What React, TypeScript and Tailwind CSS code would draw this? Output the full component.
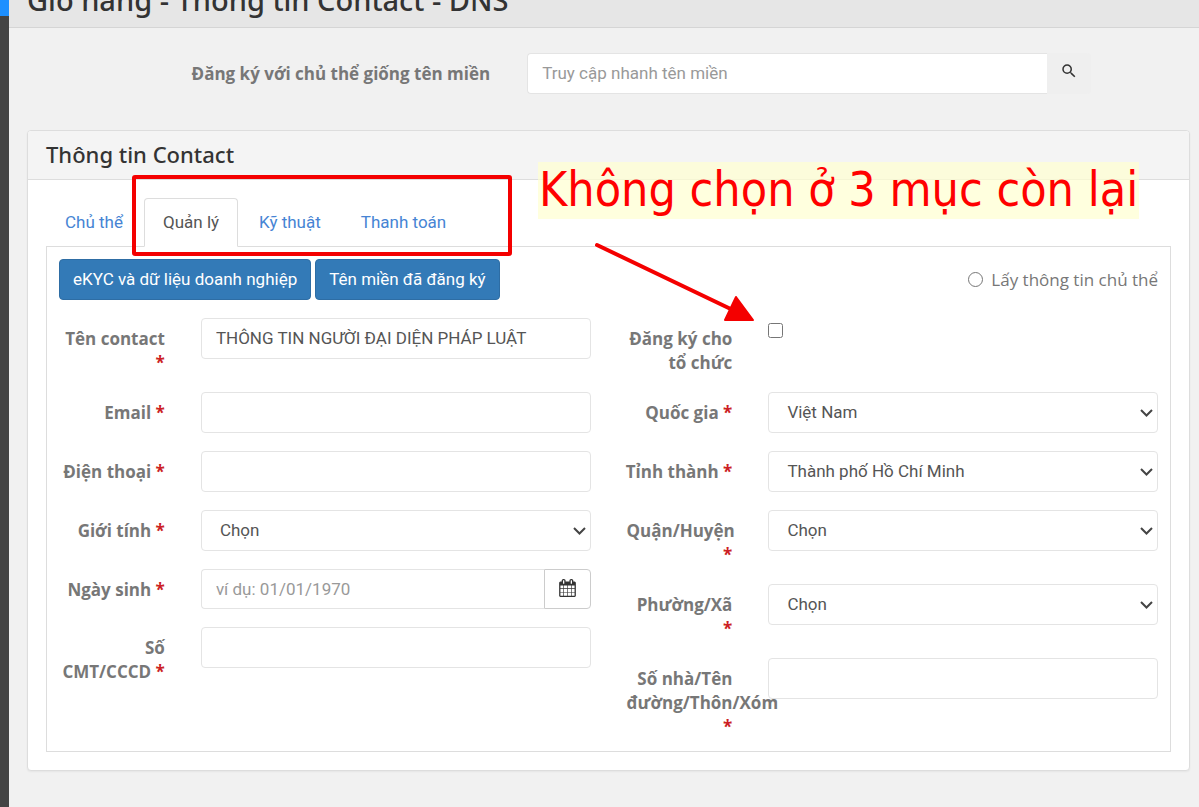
import { useState, type ReactNode } from "react";
import { MdSearch } from "react-icons/md";

const control =
  "block w-full h-[41px] rounded-[4px] border border-[#e4e4e4] bg-white pb-[2px] font-[Roboto,sans-serif] text-[17px] leading-6 text-[#555]";

function Field({
  id,
  label,
  required = true,
  nowrap = false,
  children,
}: {
  id: string;
  label: string;
  required?: boolean;
  nowrap?: boolean;
  children: ReactNode;
}) {
  return (
    <div className="grid grid-cols-4 gap-x-9">
      <label
        htmlFor={id}
        className={`-mb-px min-w-0 pt-[9px] text-right font-bold leading-6 ${nowrap ? "flex justify-end whitespace-pre" : ""}`}
      >
        {label}
        {required && <span className="text-[#cc1f25]"> *</span>}
      </label>
      <div className="col-span-3">{children}</div>
    </div>
  );
}

function TextField({ id, label, value = "" }: { id: string; label: string; value?: string }) {
  return (
    <Field id={id} label={label}>
      <input id={id} type="text" defaultValue={value} className={`${control} px-[14px]`} />
    </Field>
  );
}

function SelectField({
  id,
  label,
  option,
  nowrap,
}: {
  id: string;
  label: string;
  option: string;
  nowrap?: boolean;
}) {
  return (
    <Field id={id} label={label} nowrap={nowrap}>
      <div className="relative">
        <select id={id} className={`${control} appearance-none pl-[18px] pr-8`}>
          <option>{option}</option>
        </select>
        <svg
          viewBox="0 0 13 8"
          className="pointer-events-none absolute right-[5px] top-[17px] h-2 w-[13px] text-[#444]"
          fill="none"
          stroke="currentColor"
          strokeWidth="2"
          aria-hidden="true"
        >
          <path d="M1 1 L6.500 6.500 L12 1" />
        </svg>
      </div>
    </Field>
  );
}

function CalendarIcon() {
  return (
    <svg viewBox="0 0 1664 1792" className="h-[18px] w-[17px]" fill="currentColor" aria-hidden="true">
      <path d="M128 1664h288v-288H128zM480 1664h320v-288H480zM128 1312h288V992H128zM480 1312h320V992H480zM128 928h288V640H128zM864 1664h320v-288H864zM480 928h320V640H480zM1248 1664h288v-288h-288zM864 1312h320V992H864zM512 448V160q0-13-9.500-22.500T480 128h-64q-13 0-22.500 9.500T384 160v288q0 13 9.500 22.500T416 480h64q13 0 22.500-9.500T512 448zM1248 1312h288V992h-288zM864 928h320V640H864zM1248 928h288V640h-288zM1280 448V160q0-13-9.500-22.500T1248 128h-64q-13 0-22.500 9.500T1152 160v288q0 13 9.500 22.500T1184 480h64q13 0 22.500-9.500T1280 448zM1664 384v1280q0 52-38 90t-90 38H128q-52 0-90-38t-38-90V384q0-52 38-90t90-38h128v-96q0-66 47-113T416 0h64q66 0 113 47t47 113v96h384v-96q0-66 47-113t113-47h64q66 0 113 47t47 113v96h128q52 0 90 38t38 90z" />
    </svg>
  );
}

const tabs = ["Chủ thể", "Quản lý", "Kỹ thuật", "Thanh toán"];

function Tabs() {
  const [active, setActive] = useState("Quản lý");
  return (
    <div role="tablist" className="-mb-px flex gap-[2px] font-[Roboto,sans-serif]">
      {tabs.map((tab) => (
        <button
          key={tab}
          type="button"
          role="tab"
          aria-selected={tab === active}
          onClick={() => setActive(tab)}
          className={
            tab === active
              ? "relative h-[49px] rounded-t-[4px] border border-[#ddd] border-b-white bg-white px-[18px] pb-[2px] leading-6 text-[#555]"
              : "h-[49px] border border-transparent px-[18px] pb-[2px] leading-6 text-[#4684d4]"
          }
        >
          {tab}
        </button>
      ))}
    </div>
  );
}

function Annotations() {
  return (
    <div className="pointer-events-none absolute inset-0">
      <div className="absolute left-[104px] top-[44px] h-[81px] w-[380px] rounded-[3px] border-4 border-[#f40000]" />
      <p className="absolute left-[510px] top-[31px] h-[57px] whitespace-nowrap bg-[#ffffd0b3] px-px font-['DejaVu_Sans_Condensed','Open_Sans',sans-serif] text-[48px] leading-[54px] text-[#ff0000]">
        Không chọn ở 3 mục còn lại
      </p>
      <svg
        viewBox="0 0 160 80"
        className="absolute left-[567px] top-[111px] h-[80px] w-[160px]"
        aria-hidden="true"
      >
        <path d="M2 3 L142 70" stroke="#f40000" strokeWidth="4" strokeLinecap="round" />
        <path
          d="M141 55 L158 78 L130 78 Z"
          fill="#f40000"
          stroke="#f40000"
          strokeWidth="2"
          strokeLinejoin="round"
        />
      </svg>
    </div>
  );
}

export default function App() {
  return (
    <div className="flex min-h-screen bg-[#f1f1f1] font-['Open_Sans',sans-serif] text-[17px] text-[#777]">
      <aside className="w-[9px] shrink-0 bg-[#444]">
        <div className="h-4 bg-[#1e90ff]" />
      </aside>
      <div className="min-w-0 flex-1">
        <header className="flex h-7 items-end overflow-hidden border-b border-[#d5d5d5] bg-[#e6e6e6] px-[18px] pb-[9px]">
          <h1 className="font-['Noto_Sans',sans-serif] text-[29px] font-medium leading-[36px] text-[#333]">
            Giỏ hàng - Thông tin Contact - DNS
          </h1>
        </header>

        <main className="pl-[18px] pr-[9px] pt-[25px]">
          <form className="flex" onSubmit={(e) => e.preventDefault()}>
            <label htmlFor="domain" className="w-[40%] pr-[2px] pt-[9px] text-right font-bold leading-6">
              Đăng ký với chủ thể giống tên miền
            </label>
            <div className="ml-[35px] mr-[99px] flex flex-1">
              <input
                id="domain"
                type="text"
                placeholder="Truy cập nhanh tên miền"
                className="h-[41px] min-w-0 flex-1 rounded-l-[4px] border border-r-0 border-[#e4e4e4] bg-white px-[14px] pb-[2px] font-[Roboto,sans-serif] leading-6 text-[#555] placeholder:text-[#999]"
              />
              <button
                type="submit"
                aria-label="Tìm kiếm"
                className="flex h-[41px] w-11 justify-center rounded-r-[4px] bg-[#efefef] pt-[9px] text-[#333]"
              >
                <MdSearch size={18} />
              </button>
            </div>
          </form>

          <section className="relative mt-9 rounded-[4px] border border-[#ddd] bg-white shadow-xs">
            <h2 className="rounded-t-[3px] border-b border-[#ddd] bg-[#f4f4f4] px-[18px] pb-[9px] pt-[7px] font-['Noto_Sans',sans-serif] text-[22px] font-medium leading-8 text-[#333]">
              Thông tin Contact
            </h2>
            <div className="p-[18px]">
              <Tabs />
              <div role="tabpanel" className="border border-[#ddd] px-3 pb-[13px] pt-3">
                <div className="flex items-center gap-1 font-[Roboto,sans-serif]">
                  <button
                    type="button"
                    className="h-[41px] rounded-[4px] border border-[#2e6da4] bg-[#337ab7] px-[13px] pb-[2px] leading-6 text-white"
                  >
                    eKYC và dữ liệu doanh nghiệp
                  </button>
                  <button
                    type="button"
                    className="h-[41px] rounded-[4px] border border-[#2e6da4] bg-[#337ab7] px-[13px] pb-[2px] leading-6 text-white"
                  >
                    Tên miền đã đăng ký
                  </button>
                  <label className="ml-auto flex items-center gap-2 font-['Open_Sans',sans-serif]">
                    <input type="radio" name="source" className="size-[15px]" />
                    Lấy thông tin chủ thể
                  </label>
                </div>

                <div className="mt-[18px] grid grid-cols-2 items-start gap-x-9">
                  <div className="grid gap-y-[18px]">
                    <TextField id="name" label="Tên contact" value="THÔNG TIN NGƯỜI ĐẠI DIỆN PHÁP LUẬT" />
                    <TextField id="email" label="Email" />
                    <TextField id="phone" label="Điện thoại" />
                    <SelectField id="gender" label="Giới tính" option="Chọn" />
                    <Field id="birthday" label="Ngày sinh">
                      <div className="flex h-10">
                        <input
                          id="birthday"
                          type="text"
                          placeholder="ví dụ: 01/01/1970"
                          className="min-w-0 flex-1 rounded-l-[4px] border border-r-0 border-[#e4e4e4] bg-white px-[14px] font-[Roboto,sans-serif] leading-6 text-[#555] placeholder:text-[#999]"
                        />
                        <button
                          type="button"
                          aria-label="Chọn ngày"
                          className="flex w-[47px] items-center justify-center rounded-r-[4px] border border-[#ccc] bg-white pb-[2px] text-[#333]"
                        >
                          <CalendarIcon />
                        </button>
                      </div>
                    </Field>
                    <TextField id="idcard" label="Số CMT/CCCD" />
                  </div>

                  <div className="grid gap-y-[18px]">
                    <Field id="org" label="Đăng ký cho tổ chức" required={false}>
                      <input id="org" type="checkbox" className="mt-[5px] block size-[15px]" />
                    </Field>
                    <SelectField id="country" label="Quốc gia" option="Việt Nam" />
                    <SelectField id="city" label="Tỉnh thành" option="Thành phố Hồ Chí Minh" nowrap />
                    <SelectField id="district" label="Quận/Huyện" option="Chọn" />
                    <SelectField id="ward" label="Phường/Xã" option="Chọn" />
                    <TextField id="street" label="Số nhà/Tên đường/Thôn/Xóm" />
                  </div>
                </div>
              </div>
            </div>
            <Annotations />
          </section>
        </main>
      </div>
    </div>
  );
}
